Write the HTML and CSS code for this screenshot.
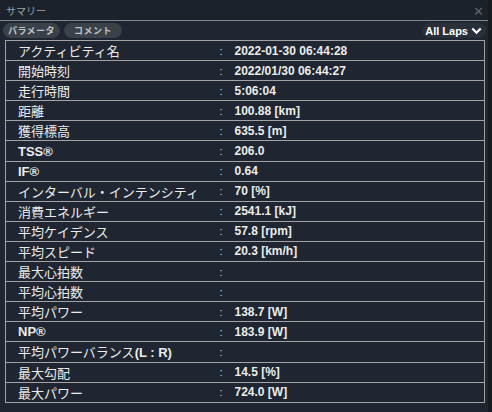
FILE: index.html
```html
<!DOCTYPE html>
<html lang="ja">
<head>
    <meta charset="UTF-8">
    <title>サマリー</title>
    <link rel="stylesheet" href="styles.css">
</head>
<body>
    <div class="panel">
        <div class="titlebar">
            <span class="title">サマリー</span>
            <span class="close">&#x2715;</span>
        </div>
        <div class="toolbar">
            <div class="tabs">
                <button class="tab">パラメータ</button>
                <button class="tab">コメント</button>
            </div>
            <div class="laps">All Laps
                <svg width="11" height="8" viewBox="0 0 11 8"><path d="M1.3 1.5 L5.5 5.8 L9.7 1.5" fill="none" stroke="#fff" stroke-width="2.2"/></svg>
            </div>
        </div>
        <table class="summary">
            <tr><td class="label">アクティビティ名</td><td class="sep">:</td><td class="value">2022-01-30 06:44:28</td></tr>
            <tr><td class="label">開始時刻</td><td class="sep">:</td><td class="value">2022/01/30 06:44:27</td></tr>
            <tr><td class="label">走行時間</td><td class="sep">:</td><td class="value">5:06:04</td></tr>
            <tr><td class="label">距離</td><td class="sep">:</td><td class="value">100.88 [km]</td></tr>
            <tr><td class="label">獲得標高</td><td class="sep">:</td><td class="value">635.5 [m]</td></tr>
            <tr><td class="label"><b>TSS®</b></td><td class="sep">:</td><td class="value">206.0</td></tr>
            <tr><td class="label"><b>IF®</b></td><td class="sep">:</td><td class="value">0.64</td></tr>
            <tr><td class="label">インターバル・インテンシティ</td><td class="sep">:</td><td class="value">70 [%]</td></tr>
            <tr><td class="label">消費エネルギー</td><td class="sep">:</td><td class="value">2541.1 [kJ]</td></tr>
            <tr><td class="label">平均ケイデンス</td><td class="sep">:</td><td class="value">57.8 [rpm]</td></tr>
            <tr><td class="label">平均スピード</td><td class="sep">:</td><td class="value">20.3 [km/h]</td></tr>
            <tr><td class="label">最大心拍数</td><td class="sep">:</td><td class="value"></td></tr>
            <tr><td class="label">平均心拍数</td><td class="sep">:</td><td class="value"></td></tr>
            <tr><td class="label">平均パワー</td><td class="sep">:</td><td class="value">138.7 [W]</td></tr>
            <tr><td class="label"><b>NP®</b></td><td class="sep">:</td><td class="value">183.9 [W]</td></tr>
            <tr><td class="label">平均パワーバランス<b>(L : R)</b></td><td class="sep">:</td><td class="value"></td></tr>
            <tr><td class="label">最大勾配</td><td class="sep">:</td><td class="value">14.5 [%]</td></tr>
            <tr><td class="label">最大パワー</td><td class="sep">:</td><td class="value">724.0 [W]</td></tr>
        </table>
    </div>
</body>
</html>
```

FILE: styles.css
```css
* {
    margin: 0;
    padding: 0;
    box-sizing: border-box;
}

body {
    background-color: #161a1f;
    font-family: 'Liberation Sans', 'Noto Sans CJK JP', sans-serif;
    color: #ececec;
}

.panel {
    width: 488px;
    height: 412px;
    background-color: #1f2631;
}

.titlebar {
    height: 21px;
    display: flex;
    align-items: center;
    justify-content: space-between;
    padding: 0 4px 0 6px;
    background-color: #1c222a;
    border-bottom: 1px solid #80858b;
}

.title {
    font-size: 10px;
    color: #9ba1a8;
}

.close {
    font-size: 13px;
    color: #5f656c;
    margin-top: 2px;
}

.toolbar {
    height: 19px;
    display: flex;
    align-items: center;
    justify-content: space-between;
    padding: 0 2px 0 3px;
}

.tabs {
    display: flex;
    gap: 4px;
}

.tab {
    width: 57px;
    height: 15px;
    border: none;
    border-radius: 8px;
    background-color: #3b4149;
    color: #bfc3c8;
    font-family: 'Noto Sans CJK JP', sans-serif;
    font-size: 9px;
    font-weight: bold;
    letter-spacing: 0.5px;
    line-height: 15px;
}

.tab + .tab {
    width: 58px;
}

.laps {
    display: flex;
    align-items: center;
    gap: 3px;
    height: 15px;
    padding: 0 4px 0 3px;
    border-radius: 8px;
    background-color: #2a3039;
    color: #fff;
    font-size: 11px;
    font-weight: bold;
}

.summary {
    width: 480px;
    margin-left: 5px;
    border-collapse: collapse;
    border: 1px solid #a3a3a3;
}

.summary td {
    height: 20.1px;
    padding: 0;
    border-bottom: 1px solid #a3a3a3;
    vertical-align: middle;
}

.label {
    width: 214px;
    padding-left: 12px !important;
    font-size: 13px;
}

.label b {
    font-family: 'Liberation Sans', sans-serif;
}

.sep {
    width: 15px;
    font-size: 11px;
    color: #cfcfcf;
}

.value {
    font-size: 12px;
    font-weight: bold;
}
```
